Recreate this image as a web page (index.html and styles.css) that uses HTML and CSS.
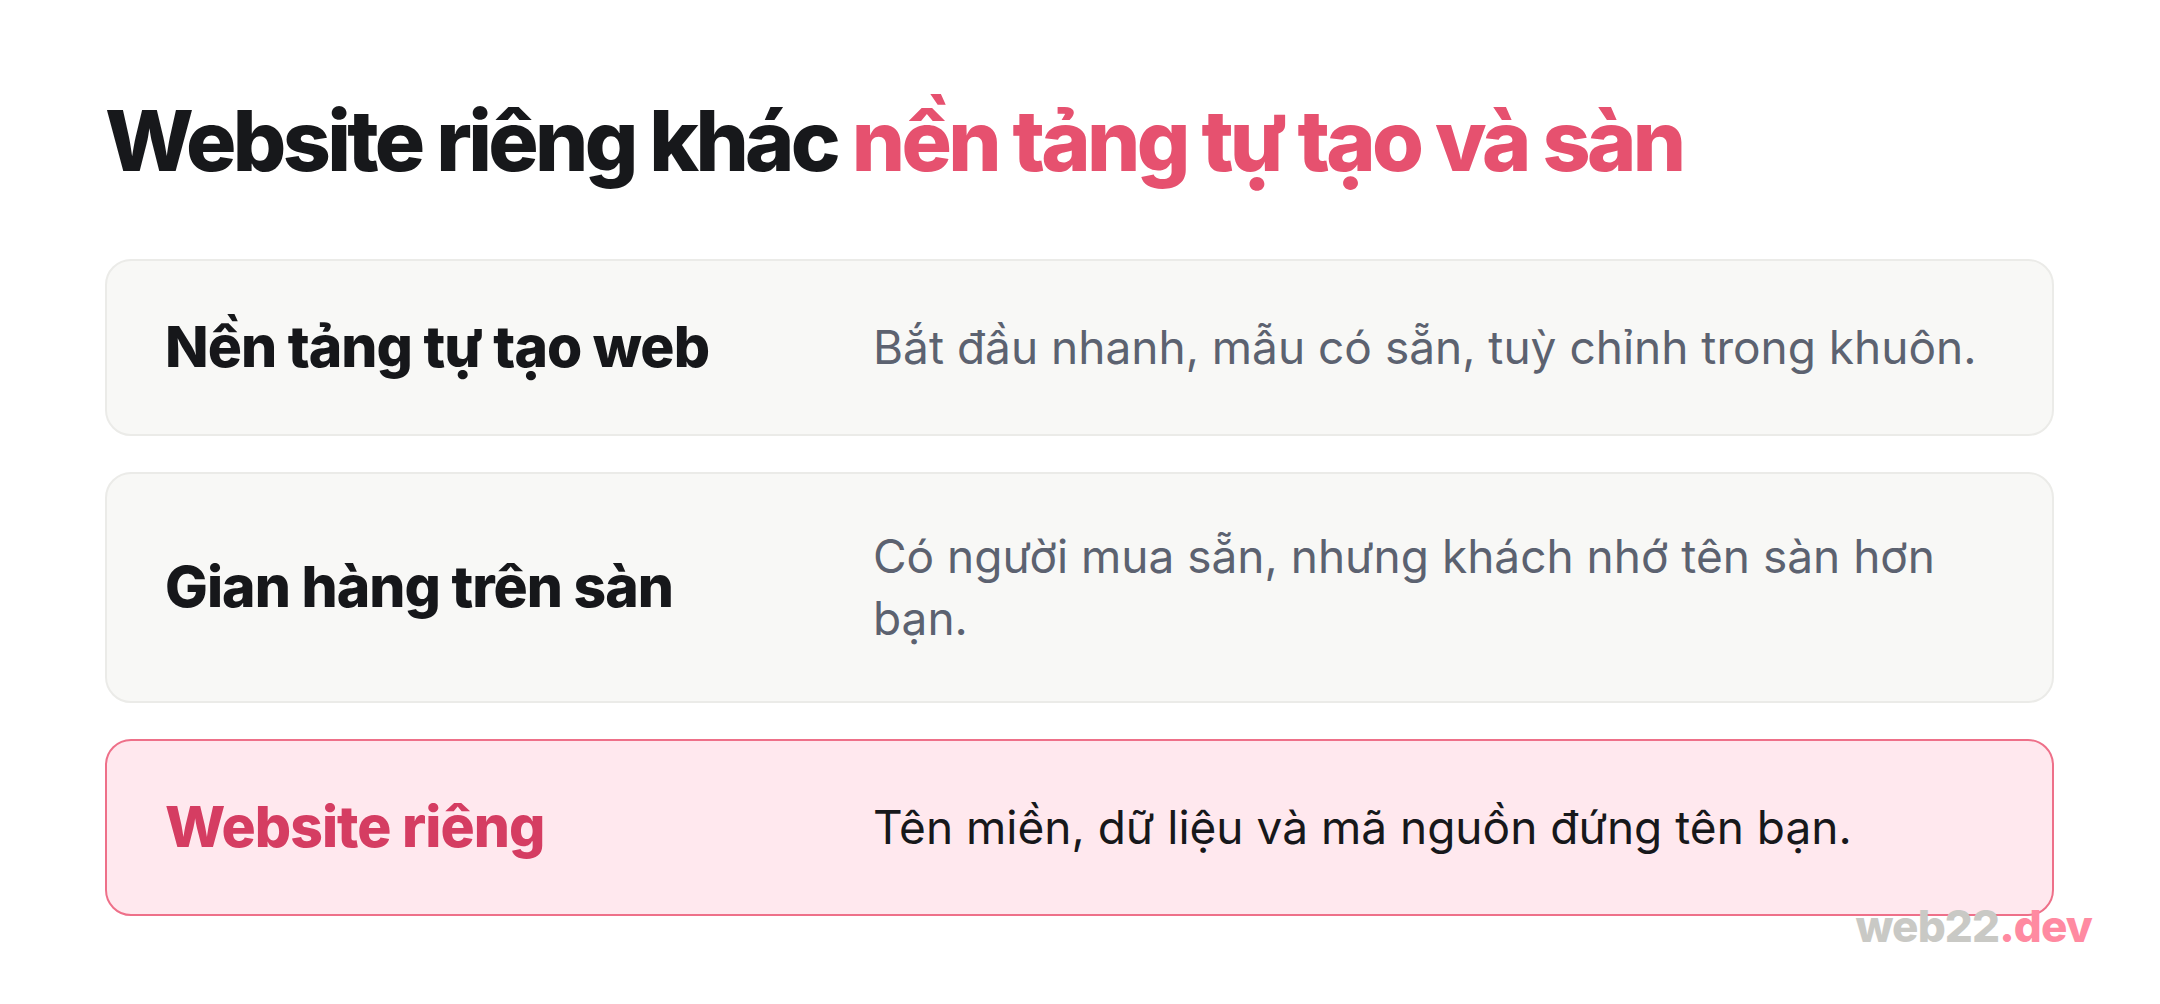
FILE: index.html
```html
<!DOCTYPE html>
<html lang="vi">
<head>
    <meta charset="UTF-8">
    <title>Website riêng</title>
    <link rel="stylesheet" href="styles.css">
</head>
<body>
    <div class="slide">
        <h1 class="title">Website riêng khác <span class="accent">nền tảng tự tạo và sàn</span></h1>
        <div class="list">
            <div class="row">
                <div class="label">Nền tảng tự tạo web</div>
                <div class="desc">Bắt đầu nhanh, mẫu có sẵn, tuỳ chỉnh trong khuôn.</div>
            </div>
            <div class="row">
                <div class="label">Gian hàng trên sàn</div>
                <div class="desc">Có người mua sẵn, nhưng khách nhớ tên sàn hơn bạn.</div>
            </div>
            <div class="row active">
                <div class="label">Website riêng</div>
                <div class="desc">Tên miền, dữ liệu và mã nguồn đứng tên bạn.</div>
            </div>
        </div>
    </div>
    <div class="mark">web22<span>.dev</span></div>
</body>
</html>
```

FILE: styles.css
```css
* {
    box-sizing: border-box;
}

body, html {
    margin: 0;
    padding: 0;
    background: #fff;
    font-family: Inter, "Noto Sans", sans-serif;
}
body {
    position: relative;
    width: 2160px;
    height: 1004px;
    overflow: hidden;
}

.slide {
    display: flex;
    flex-direction: column;
    padding: 91px 106px 0 105px;
}

.title {
    margin: 0 0 67px 0;
    font-size: 84px;
    line-height: 1.2;
    font-weight: 800;
    letter-spacing: -0.044em;
    color: #17181b;
}
.title .accent {
    color: #e6516f;
}

.list {
    display: flex;
    flex-direction: column;
    gap: 36px;
}

.row {
    display: grid;
    grid-template-columns: 708px 1fr;
    align-items: center;
    padding: 51px 60px 52px 58px;
    background: #f8f8f6;
    border: 2px solid #ebebe8;
    border-radius: 26px;
}

.label {
    font-size: 57px;
    line-height: 70px;
    font-weight: 800;
    letter-spacing: -0.017em;
    color: #16171a;
}

.desc {
    font-size: 46px;
    line-height: 62px;
    color: #5c6270;
}

.row.active {
    background: #ffe8ee;
    border-color: #ee7089;
}
.row.active .label {
    color: #d53d62;
}
.row.active .desc {
    color: #17181b;
}

.mark {
    position: absolute;
    right: 68px;
    top: 904px;
    font-size: 44px;
    line-height: 1;
    font-weight: 800;
    letter-spacing: -0.02em;
    color: #c9c9c5;
}
.mark span {
    color: #ff8aa1;
}
```
